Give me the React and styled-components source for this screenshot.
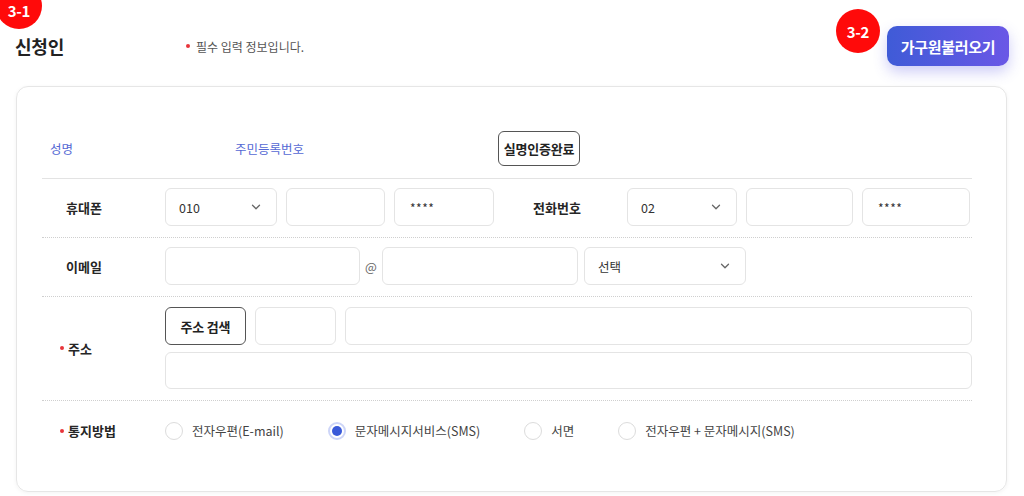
import React from 'react';
import styled, { createGlobalStyle } from 'styled-components';
import { ChevronDown } from 'lucide-react';

const GlobalStyle = createGlobalStyle`
  html, body {
    margin: 0;
    padding: 0;
    background: #fff;
  }
  body {
    font-family: "Noto Sans CJK KR", "Noto Sans", sans-serif;
    color: #333;
  }
  * {
    box-sizing: border-box;
  }
`;

const Page = styled.div`
  position: relative;
  width: 1024px;
  height: 496px;
  overflow: hidden;
  padding: 0 16px 0 16px;
`;

const Badge = styled.div`
  position: absolute;
  left: ${(p) => p.left}px;
  top: ${(p) => p.top}px;
  width: ${(p) => p.size}px;
  height: ${(p) => p.size}px;
  border-radius: 50%;
  background: #ff0a0a;
  color: #fff;
  font-size: 15px;
  font-weight: 700;
  display: flex;
  align-items: center;
  justify-content: center;
  padding-top: ${(p) => p.shift || 0}px;
  letter-spacing: -0.3px;
  z-index: 2;
`;

const Header = styled.div`
  display: flex;
  align-items: center;
  height: 86px;
  padding-top: 6px;
`;

const Title = styled.h2`
  margin: 0 0 0 -1px;
  width: 171px;
  font-size: 18px;
  font-weight: 700;
  color: #222;
  letter-spacing: -0.2px;
`;

const Note = styled.p`
  margin: 0;
  display: flex;
  align-items: center;
  gap: 6px;
  font-size: 12px;
  color: #555;
`;

const Dot = styled.span`
  display: inline-block;
  width: 4px;
  height: 4px;
  border-radius: 50%;
  background: #e8343a;
`;

const LoadButton = styled.button`
  margin-left: auto;
  margin-right: -1px;
  width: 122px;
  height: 40px;
  border: none;
  border-radius: 10px;
  background: linear-gradient(90deg, #3f5bd7 0%, #6a57e6 100%);
  color: #fff;
  font-family: inherit;
  font-size: 15px;
  font-weight: 700;
  letter-spacing: -0.3px;
  box-shadow: 0 6px 14px rgba(92, 88, 230, 0.3);
`;

const Card = styled.section`
  height: 406px;
  border: 1px solid #e6e6e6;
  border-radius: 12px;
  box-shadow: 0 1px 4px rgba(0, 0, 0, 0.05);
  padding: 44px 34px 0 25px;
  margin-right: 1px;
`;

const NameRow = styled.div`
  display: grid;
  grid-template-columns: 185px 263px auto;
  align-items: center;
  padding: 0 0 12px 8px;
  border-bottom: 1px solid #e3e3e3;
`;

const InfoLabel = styled.span`
  font-size: 12.5px;
  color: #5468d4;
`;

const OutlineButton = styled.button`
  flex: 0 0 ${(p) => p.w}px;
  width: ${(p) => p.w}px;
  height: ${(p) => p.h}px;
  border: 1.5px solid #555;
  border-radius: 6px;
  background: #fff;
  color: #222;
  font-family: inherit;
  font-size: 13px;
  font-weight: 700;
  letter-spacing: -0.2px;
  padding: 0;
`;

const FieldRow = styled.div`
  display: grid;
  grid-template-columns: 123px 1fr;
  align-items: center;
  padding: ${(p) => p.pad || '9px 0 11px'};
  border-bottom: ${(p) => (p.last ? 'none' : '1px dotted #cfcfcf')};
`;

const FieldLabel = styled.span`
  display: flex;
  align-items: center;
  gap: 4px;
  padding-left: ${(p) => (p.required ? 18 : 24)}px;
  font-size: 13px;
  font-weight: 700;
  color: #262626;
`;

const Controls = styled.div`
  display: flex;
  align-items: center;
  gap: ${(p) => p.gap ?? 9}px;
`;

const Input = styled.div`
  flex: ${(p) => (p.w ? `0 0 ${p.w}px` : '1 1 auto')};
  width: ${(p) => (p.w ? `${p.w}px` : 'auto')};
  height: ${(p) => p.h || 38}px;
  border: 1px solid #e4e4e4;
  border-radius: 6px;
  background: #fff;
  display: flex;
  align-items: center;
  padding-left: 15px;
  font-size: 12px;
  color: #333;
  letter-spacing: 0.5px;
`;

const Select = styled.div`
  flex: 0 0 ${(p) => p.w}px;
  margin-left: ${(p) => p.ml || 0}px;
  height: 38px;
  border: 1px solid #e4e4e4;
  border-radius: 6px;
  background: #fff;
  display: flex;
  align-items: center;
  justify-content: space-between;
  padding: 0 13px 0 13px;
  font-size: 12.5px;
  color: #333;
  svg {
    color: #666;
  }
`;

const InlineLabel = styled.span`
  flex: 0 0 115px;
  padding-right: 7px;
  text-align: center;
  font-size: 13px;
  font-weight: 700;
  color: #262626;
`;

const At = styled.span`
  flex: 0 0 22px;
  text-align: center;
  font-size: 12.5px;
  color: #666;
`;

const AddressStack = styled.div`
  display: flex;
  flex-direction: column;
  gap: 7px;
`;

const RadioGroup = styled.div`
  display: flex;
  align-items: center;
  gap: 44px;
`;

const RadioItem = styled.label`
  display: flex;
  align-items: center;
  gap: 9px;
  font-size: 12.5px;
  color: #444;
`;

const RadioCircle = styled.span`
  position: relative;
  width: 18px;
  height: 18px;
  border-radius: 50%;
  border: ${(p) => (p.checked ? '2px solid #cdd5f8' : '1px solid #dcdcdc')};
  background: #fff;
  &::after {
    content: '';
    display: ${(p) => (p.checked ? 'block' : 'none')};
    position: absolute;
    left: 2px;
    top: 2px;
    width: 10px;
    height: 10px;
    border-radius: 50%;
    background: #3a5ad9;
  }
`;

const notices = [
  { label: '전자우편(E-mail)' },
  { label: '문자메시지서비스(SMS)', checked: true },
  { label: '서면' },
  { label: '전자우편 + 문자메시지(SMS)' },
];

function SelectBox({ w, ml, value }) {
  return (
    <Select w={w} ml={ml}>
      <span>{value}</span>
      <ChevronDown size={14} strokeWidth={2.2} />
    </Select>
  );
}

export default function App() {
  return (
    <>
      <GlobalStyle />
      <Page>
        <Badge left={-4} top={-17} size={46} shift={8}>3-1</Badge>
        <Badge left={836} top={9} size={44}>3-2</Badge>

        <Header>
          <Title>신청인</Title>
          <Note>
            <Dot />
            필수 입력 정보입니다.
          </Note>
          <LoadButton>가구원불러오기</LoadButton>
        </Header>

        <Card>
          <NameRow>
            <InfoLabel>성명</InfoLabel>
            <InfoLabel>주민등록번호</InfoLabel>
            <OutlineButton w={82} h={35}>실명인증완료</OutlineButton>
          </NameRow>

          <FieldRow>
            <FieldLabel>휴대폰</FieldLabel>
            <Controls>
              <SelectBox w={112} value="010" />
              <Input w={99} />
              <Input w={100}>****</Input>
              <InlineLabel>전화번호</InlineLabel>
              <SelectBox w={110} value="02" />
              <Input w={107} />
              <Input w={108}>****</Input>
            </Controls>
          </FieldRow>

          <FieldRow>
            <FieldLabel>이메일</FieldLabel>
            <Controls gap={0}>
              <Input w={195} />
              <At>@</At>
              <Input w={196} />
              <SelectBox w={162} ml={6} value="선택" />
            </Controls>
          </FieldRow>

          <FieldRow pad="10px 0 11px">
            <FieldLabel required>
              <Dot />
              주소
            </FieldLabel>
            <AddressStack>
              <Controls>
                <OutlineButton w={81} h={38}>주소 검색</OutlineButton>
                <Input w={81} />
                <Input />
              </Controls>
              <Input h={37} />
            </AddressStack>
          </FieldRow>

          <FieldRow pad="20px 0" last>
            <FieldLabel required>
              <Dot />
              통지방법
            </FieldLabel>
            <RadioGroup>
              {notices.map((n) => (
                <RadioItem key={n.label}>
                  <RadioCircle checked={n.checked} />
                  {n.label}
                </RadioItem>
              ))}
            </RadioGroup>
          </FieldRow>
        </Card>
      </Page>
    </>
  );
}
